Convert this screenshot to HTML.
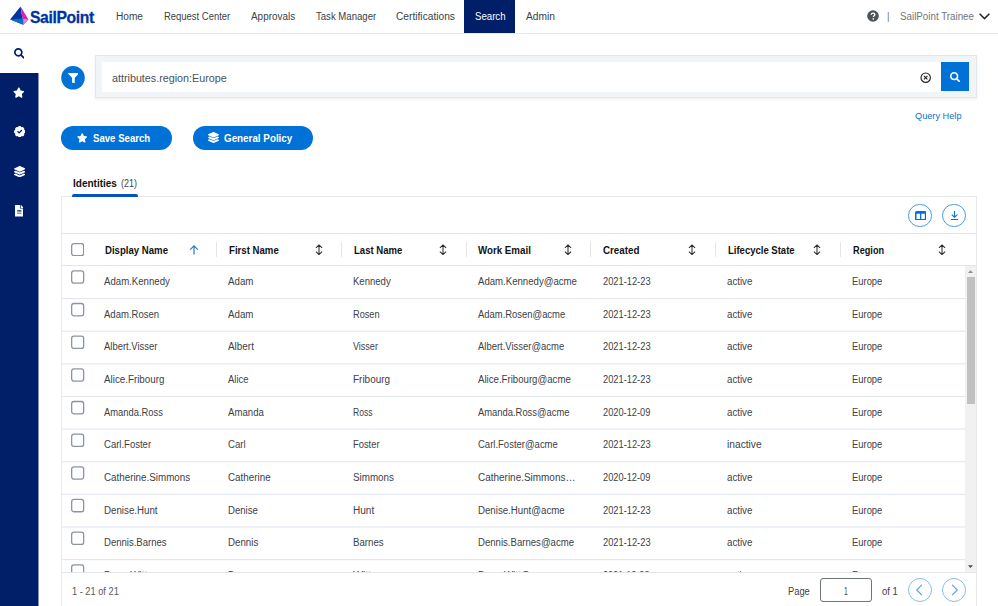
<!DOCTYPE html>
<html><head><meta charset="utf-8"><title>Search</title>
<style>
html,body{margin:0;padding:0;overflow:hidden}
html{width:998px;height:606px}
body{width:998px;height:606px;position:relative;overflow:hidden;background:#fff;font-family:"Liberation Sans",sans-serif}
div,span,svg{position:absolute;box-sizing:border-box}
.t{white-space:nowrap;line-height:14px;transform-origin:0 50%;display:block}
.nav{left:0;top:0;width:998px;height:34px;border-bottom:1px solid #e6e8eb;background:#fff}
.act{left:464px;top:0;width:51px;height:33.3px;background:#011e69}
.side{left:0;top:73px;width:38.2px;height:533px;background:#011e69}
.sbox{left:95px;top:55px;width:882px;height:43px;background:#f1f5f8;border:1px solid #e2e7ec;box-shadow:0 1px 3px rgba(0,0,0,.08)}
.sinp{left:102px;top:62px;width:839px;height:29.6px;background:#fff}
.sbtn{left:940.6px;top:62px;width:28.8px;height:29.4px;background:#0071d6}
.fcirc{left:61.2px;top:65.7px;width:23.8px;height:23.8px;border-radius:12px;background:#0071d6}
.pill{top:125.8px;height:23.8px;border-radius:12px;background:#0071d6}
.tabu{left:71.8px;top:194px;width:66.5px;height:2.8px;background:#0553c4;border-radius:2px 2px 0 0}
.tbl{left:61px;top:196.3px;width:916.3px;height:409.7px;border:1px solid #e8e9ec;border-bottom:0;background:#fff}
.hl{left:62px;width:914.5px;height:1px;background:#e1e5ed}
.rl{left:62px;width:903.5px;height:1px;background:#e5e9f2}
.sep{top:241.7px;width:1px;height:15.3px;background:#e4e6ea}
.cb{left:71px;width:13.2px;height:13.2px;border:1px solid #8e959c;border-radius:2.5px;background:#fff}
.circ{width:23.6px;height:23.6px;border-radius:12px;border:1px solid #4a9be6;background:#fff}
.sbar{left:965.4px;top:265.5px;width:11px;height:307px;background:#f1f1f1}
.thumb{left:966.8px;top:277px;width:8.2px;height:127px;background:#c1c1c1}
.foot{left:62px;top:572.2px;width:914px;height:34px;background:#fff;border-top:1px solid #e5e6ea}
.pinp{left:819.8px;top:578px;width:52px;height:23.6px;border:1px solid #6d747b;border-radius:3px;background:#fff}
#rows{left:0;top:0;width:998px;height:572.4px;overflow:hidden}
</style></head><body>
<div class="nav"></div>
<div class="act"></div>
<!-- logo -->
<svg style="left:9px;top:5px" width="22" height="22" viewBox="9 5 22 22">
<polygon points="20.6,6.6 10.1,19.6 23.4,24.7" fill="#0033a1"/>
<polygon points="20.6,6.6 28.4,19.5 23.4,24.7" fill="#cc27b0"/>
<polygon points="10.1,19.6 23.2,18.4 23.4,24.7" fill="#0071ce"/>
<polygon points="23.2,18.4 28.4,19.5 23.4,24.7" fill="#e17fd2"/>
</svg>
<span class="t" id="logo" style="-webkit-text-stroke:.3px #0033a1;left:29.7px;top:7.7px;font-size:17px;line-height:20px;font-weight:700;color:#0033a1;letter-spacing:-0.4px;transform:scaleX(0.925)">SailPoint</span>
<div style="left:93.700px;top:22.300px;width:1.200px;height:1.200px;background:#5069b8"></div>
<!-- help icon -->
<svg style="left:867.4px;top:10.4px" width="12" height="12" viewBox="0 0 12 12"><circle cx="6" cy="6" r="5.8" fill="#4d5359"/><path d="M4.3 4.7c0-1 .8-1.6 1.8-1.6s1.8.6 1.800 1.500c0 1.200-1.500 1.200-1.500 2.400" stroke="#fff" stroke-width="1.300" fill="none"/><circle cx="6.300" cy="8.800" r=".850" fill="#fff"/></svg>
<svg style="left:979px;top:13px" width="11" height="7" viewBox="0 0 11 7"><path d="M.6.700 5.500 5.600 10.400.7" stroke="#22262a" stroke-width="1.500" fill="none"/></svg>
<!-- sidebar -->
<div class="side"></div>
<div style="left:38px;top:73px;width:1px;height:533px;background:rgba(0,16,92,.45)"></div>
<svg style="left:13.600px;top:48.200px" width="10.700" height="10.700" viewBox="0 0 512 512"><path fill="#011e69" d="M505 442.700 405.300 343c-4.500-4.500-10.600-7-17-7H372c27.600-35.300 44-79.700 44-128C416 93.100 322.900 0 208 0S0 93.100 0 208s93.100 208 208 208c48.300 0 92.700-16.400 128-44v16.300c0 6.400 2.500 12.500 7 17l99.700 99.700c9.400 9.400 24.600 9.400 33.900 0l28.300-28.300c9.400-9.400 9.400-24.600.1-34zM208 336c-70.700 0-128-57.200-128-128 0-70.700 57.200-128 128-128 70.700 0 128 57.200 128 128 0 70.700-57.200 128-128 128z"/></svg>
<svg style="left:13.200px;top:87.000px" width="11.600" height="11.200" viewBox="0 0 576 512"><path fill="#fff" d="M259.300 17.800 194 150.200 47.900 171.500c-26.200 3.800-36.700 36.100-17.700 54.600l105.700 103-25 145.500c-4.500 26.300 23.200 46 46.400 33.700L288 439.600l130.700 68.700c23.200 12.200 50.900-7.400 46.400-33.700l-25-145.500 105.700-103c19-18.500 8.500-50.800-17.700-54.600L382 150.200 316.700 17.800c-11.700-23.600-45.600-23.900-57.400 0z"/></svg>
<svg style="left:13.600px;top:125.900px" width="11.400" height="11.400" viewBox="0 0 512 512"><path fill="#fff" d="M512 256c0-37.700-23.700-69.900-57.100-82.400 14.700-32.400 8.800-71.900-17.900-98.600-26.700-26.700-66.200-32.600-98.600-17.900C325.900 23.700 293.700 0 256 0s-69.900 23.700-82.400 57.100c-32.400-14.700-72-8.800-98.600 17.900-26.700 26.700-32.600 66.200-17.900 98.600C23.700 186.100 0 218.300 0 256s23.700 69.900 57.100 82.400c-14.700 32.400-8.800 72 17.900 98.600 26.600 26.600 66.100 32.700 98.600 17.900 12.500 33.300 44.700 57.100 82.400 57.100s69.900-23.700 82.400-57.100c32.600 14.800 72 8.700 98.600-17.900 26.700-26.700 32.600-66.200 17.900-98.600 33.400-12.500 57.100-44.700 57.100-82.400zm-144.800-44.250L236.160 341.740c-4.310 4.280-11.280 4.250-15.550-.06l-75.720-76.330c-4.280-4.310-4.250-11.280.06-15.560l26.030-25.820c4.310-4.280 11.280-4.250 15.560.06l42.150 42.490 97.200-96.420c4.310-4.280 11.280-4.250 15.550.06l25.820 26.030c4.280 4.320 4.260 11.290-.06 15.560z"/></svg>
<svg style="left:13.600px;top:165.500px" width="11.400" height="11.400" viewBox="0 0 512 512"><path fill="#fff" d="M12.410 148.020l232.940 105.670c6.800 3.090 14.490 3.090 21.290 0l232.940-105.670c16.550-7.510 16.550-32.520 0-40.030L266.650 2.310a25.607 25.607 0 0 0-21.290 0L12.410 107.980c-16.550 7.510-16.550 32.530 0 40.040zm487.180 88.280l-58.090-26.330-161.640 73.270c-7.560 3.430-15.590 5.170-23.860 5.170s-16.290-1.740-23.860-5.170L70.510 209.970l-58.100 26.330c-16.550 7.500-16.550 32.500 0 40l232.940 105.590c6.800 3.080 14.490 3.080 21.290 0L499.590 276.300c16.550-7.500 16.550-32.500 0-40zm0 127.800l-57.870-26.230-161.860 73.370c-7.560 3.430-15.590 5.170-23.860 5.170s-16.290-1.740-23.860-5.170L70.290 337.870 12.410 364.100c-16.550 7.500-16.550 32.500 0 40l232.940 105.590c6.800 3.080 14.490 3.080 21.290 0L499.590 404.100c16.550-7.500 16.550-32.500 0-40z"/></svg>
<svg style="left:14.900px;top:205.300px" width="8.600" height="11.500" viewBox="0 0 384 512"><path fill="#fff" d="M224 136V0H24C10.700 0 0 10.700 0 24v464c0 13.300 10.700 24 24 24h336c13.300 0 24-10.700 24-24V160H248c-13.200 0-24-10.800-24-24zm64 236c0 6.600-5.400 12-12 12H108c-6.600 0-12-5.400-12-12v-8c0-6.600 5.400-12 12-12h168c6.600 0 12 5.400 12 12v8zm0-64c0 6.600-5.400 12-12 12H108c-6.600 0-12-5.400-12-12v-8c0-6.600 5.400-12 12-12h168c6.600 0 12 5.400 12 12v8zm0-72v8c0 6.600-5.400 12-12 12H108c-6.600 0-12-5.400-12-12v-8c0-6.600 5.400-12 12-12h168c6.600 0 12 5.400 12 12zm96-114.100v6.100H256V0h6.100c6.400 0 12.500 2.500 17 7l97.900 98c4.500 4.500 7 10.600 7 16.900z"/></svg>
<!-- filter & search -->
<svg style="left:58px;top:62px" width="30" height="30" viewBox="0 0 30 30"><circle cx="15.000" cy="15.800" r="11.800" fill="#0071d6"/></svg>
<svg style="left:67.700px;top:72.700px" width="10.800" height="10.800" viewBox="0 0 512 512"><path fill="#fff" d="M487.976 0H24.028C2.710 0-8.047 25.866 7.058 40.971L192 225.941V432c0 7.831 3.821 15.170 10.237 19.662l80 55.980C298.020 518.690 320 507.493 320 487.980V225.941l184.947-184.970C520.021 25.896 509.338 0 487.976 0z"/></svg>
<div class="sbox"></div>
<div class="sinp"></div>
<div class="sbtn"></div>
<svg style="left:949.700px;top:72.200px" width="10.300" height="10.300" viewBox="0 0 512 512"><path fill="#fff" d="M505 442.700 405.300 343c-4.500-4.500-10.600-7-17-7H372c27.600-35.300 44-79.700 44-128C416 93.100 322.900 0 208 0S0 93.100 0 208s93.100 208 208 208c48.300 0 92.700-16.400 128-44v16.300c0 6.400 2.500 12.500 7 17l99.700 99.700c9.400 9.400 24.600 9.400 33.900 0l28.300-28.300c9.400-9.400 9.400-24.600.1-34zM208 336c-70.700 0-128-57.200-128-128 0-70.700 57.200-128 128-128 70.700 0 128 57.200 128 128 0 70.700-57.200 128-128 128z"/></svg>
<svg style="left:920.200px;top:71.500px" width="11.400" height="11.400" viewBox="0 0 11.400 11.400"><circle cx="5.700" cy="5.700" r="4.700" fill="none" stroke="#22262a" stroke-width="1.150"/><path d="M3.950 3.950 7.450 7.450M7.450 3.950 3.950 7.450" stroke="#22262a" stroke-width="1.200"/></svg>
<!-- buttons -->
<div class="pill" style="left:61px;width:110.500px"></div>
<div class="pill" style="left:192.800px;width:120.400px"></div>
<svg style="left:76.800px;top:133px" width="10.400" height="9.800" viewBox="0 0 576 512"><path fill="#fff" d="M259.300 17.800 194 150.200 47.900 171.500c-26.200 3.800-36.700 36.100-17.700 54.600l105.700 103-25 145.500c-4.500 26.300 23.200 46 46.400 33.700L288 439.600l130.700 68.700c23.200 12.200 50.900-7.400 46.400-33.700l-25-145.500 105.700-103c19-18.500 8.500-50.800-17.700-54.600L382 150.200 316.700 17.800c-11.700-23.600-45.600-23.900-57.400 0z"/></svg>
<svg style="left:207.800px;top:132.400px" width="11" height="11" viewBox="0 0 512 512"><path fill="#fff" d="M12.410 148.020l232.940 105.670c6.800 3.090 14.490 3.090 21.290 0l232.940-105.670c16.550-7.510 16.550-32.520 0-40.030L266.650 2.310a25.607 25.607 0 0 0-21.290 0L12.410 107.980c-16.550 7.510-16.550 32.530 0 40.040zm487.180 88.280l-58.090-26.330-161.640 73.270c-7.560 3.430-15.590 5.170-23.860 5.170s-16.290-1.740-23.860-5.170L70.510 209.970l-58.100 26.330c-16.550 7.500-16.550 32.500 0 40l232.940 105.590c6.800 3.080 14.490 3.080 21.290 0L499.590 276.300c16.550-7.500 16.550-32.500 0-40zm0 127.800l-57.870-26.230-161.860 73.370c-7.560 3.430-15.590 5.170-23.860 5.170s-16.290-1.740-23.860-5.170L70.290 337.870 12.410 364.100c-16.550 7.500-16.550 32.500 0 40l232.940 105.590c6.800 3.080 14.490 3.080 21.290 0L499.590 404.100c16.550-7.500 16.550-32.500 0-40z"/></svg>
<!-- tab + table -->
<div class="tbl"></div>
<div class="tabu"></div>
<div class="hl" style="top:232.800px"></div>
<div class="hl" style="top:264.800px"></div>
<div class="circ" style="left:908.400px;top:203.500px"></div>
<div class="circ" style="left:942.300px;top:203.500px"></div>
<svg style="left:914.800px;top:210.700px" width="11.300" height="9.500" viewBox="0 0 11.300 9.500"><rect x="0" y="0" width="11.300" height="9.500" rx="1.500" fill="#0071d6"/><rect x="1.500" y="2.700" width="3.500" height="5.300" fill="#fff"/><rect x="6.300" y="2.700" width="3.500" height="5.300" fill="#fff"/></svg>
<svg style="left:949px;top:210px" width="11" height="11" viewBox="0 0 11 11"><path d="M5.500 1v6M2.700 4.600 5.500 7.300 8.300 4.600M1.800 9.500h7.400" stroke="#0071d6" stroke-width="1.100" fill="none"/></svg>
<svg style="left:71px;top:242.900px" width="13.300" height="13.300" viewBox="0 0 13.300 13.300"><rect x=".650" y=".650" width="12" height="12" rx="2.300" fill="#fff" stroke="#8b95a1" stroke-width="1.300"/></svg>
<div class="sep" style="left:216.400px"></div>
<div class="sep" style="left:341px"></div>
<div class="sep" style="left:465.700px"></div>
<div class="sep" style="left:590.300px"></div>
<div class="sep" style="left:715px"></div>
<div class="sep" style="left:839.600px"></div>
<!-- sort icons -->
<svg style="left:188.600px;top:244.600px" width="10" height="10" viewBox="0 0 10 10"><path d="M5 9.500V1M1.200 4.600 5 .9 8.800 4.600" stroke="#1a78d6" stroke-width="1.150" fill="none"/></svg>
<svg style="left:314.5px;top:243.800px" width="8" height="11.500" viewBox="0 0 8 11.500"><path d="M4 1v9.500M.9 3.900 4 .9 7.100 3.900M.9 7.600 4 10.600 7.100 7.600" stroke="#2a2e33" stroke-width="1.050" fill="none"/></svg>
<svg style="left:438.9px;top:243.800px" width="8" height="11.500" viewBox="0 0 8 11.500"><path d="M4 1v9.500M.9 3.900 4 .9 7.100 3.900M.9 7.600 4 10.600 7.100 7.600" stroke="#2a2e33" stroke-width="1.050" fill="none"/></svg>
<svg style="left:563.5px;top:243.800px" width="8" height="11.500" viewBox="0 0 8 11.500"><path d="M4 1v9.500M.9 3.900 4 .9 7.100 3.900M.9 7.600 4 10.600 7.100 7.600" stroke="#2a2e33" stroke-width="1.050" fill="none"/></svg>
<svg style="left:688.1px;top:243.800px" width="8" height="11.500" viewBox="0 0 8 11.500"><path d="M4 1v9.500M.9 3.900 4 .9 7.100 3.900M.9 7.600 4 10.600 7.100 7.600" stroke="#2a2e33" stroke-width="1.050" fill="none"/></svg>
<svg style="left:813.1px;top:243.800px" width="8" height="11.500" viewBox="0 0 8 11.500"><path d="M4 1v9.500M.9 3.900 4 .9 7.100 3.900M.9 7.600 4 10.600 7.100 7.600" stroke="#2a2e33" stroke-width="1.050" fill="none"/></svg>
<svg style="left:938.1px;top:243.800px" width="8" height="11.500" viewBox="0 0 8 11.500"><path d="M4 1v9.500M.9 3.900 4 .9 7.100 3.900M.9 7.600 4 10.600 7.100 7.600" stroke="#2a2e33" stroke-width="1.050" fill="none"/></svg>
<div id="rows">
<svg style="left:62px;top:0" width="904" height="606" viewBox="0 0 904 606"><rect x="0" y="298.00" width="903.5" height="1.15" fill="#e3e7f1"/><rect x="0" y="330.63" width="903.5" height="1.15" fill="#e3e7f1"/><rect x="0" y="363.26" width="903.5" height="1.15" fill="#e3e7f1"/><rect x="0" y="395.89" width="903.5" height="1.15" fill="#e3e7f1"/><rect x="0" y="428.52" width="903.5" height="1.15" fill="#e3e7f1"/><rect x="0" y="461.15" width="903.5" height="1.15" fill="#e3e7f1"/><rect x="0" y="493.78" width="903.5" height="1.15" fill="#e3e7f1"/><rect x="0" y="526.41" width="903.5" height="1.15" fill="#e3e7f1"/><rect x="0" y="559.04" width="903.5" height="1.15" fill="#e3e7f1"/></svg>
<svg style="left:68px;top:0" width="20" height="606" viewBox="0 0 20 606"><rect x="3.65" y="270.85" width="12" height="12.3" rx="2.3" fill="#fff" stroke="#8b95a1" stroke-width="1.3"/><rect x="3.65" y="303.51" width="12" height="12.3" rx="2.3" fill="#fff" stroke="#8b95a1" stroke-width="1.3"/><rect x="3.65" y="336.17" width="12" height="12.3" rx="2.3" fill="#fff" stroke="#8b95a1" stroke-width="1.3"/><rect x="3.65" y="368.83" width="12" height="12.3" rx="2.3" fill="#fff" stroke="#8b95a1" stroke-width="1.3"/><rect x="3.65" y="401.49" width="12" height="12.3" rx="2.3" fill="#fff" stroke="#8b95a1" stroke-width="1.3"/><rect x="3.65" y="434.15" width="12" height="12.3" rx="2.3" fill="#fff" stroke="#8b95a1" stroke-width="1.3"/><rect x="3.65" y="466.81" width="12" height="12.3" rx="2.3" fill="#fff" stroke="#8b95a1" stroke-width="1.3"/><rect x="3.65" y="499.47" width="12" height="12.3" rx="2.3" fill="#fff" stroke="#8b95a1" stroke-width="1.3"/><rect x="3.65" y="532.13" width="12" height="12.3" rx="2.3" fill="#fff" stroke="#8b95a1" stroke-width="1.3"/><rect x="3.65" y="564.79" width="12" height="12.3" rx="2.3" fill="#fff" stroke="#8b95a1" stroke-width="1.3"/></svg>
<span class="t" style="left:104.30px;top:274.64px;font-size:10px;font-weight:400;color:#3d4146;transform:scaleX(0.9630)">Adam.Kennedy</span>
<span class="t" style="left:228.10px;top:274.64px;font-size:10px;font-weight:400;color:#3d4146;transform:scaleX(0.9724)">Adam</span>
<span class="t" style="left:353.40px;top:274.64px;font-size:10px;font-weight:400;color:#3d4146;transform:scaleX(0.9536)">Kennedy</span>
<span class="t" style="left:477.50px;top:274.64px;font-size:10px;font-weight:400;color:#3d4146;transform:scaleX(0.9605)">Adam.Kennedy@acme</span>
<span class="t" style="left:602.50px;top:274.64px;font-size:10px;font-weight:400;color:#3d4146;transform:scaleX(0.9296)">2021-12-23</span>
<span class="t" style="left:727.25px;top:274.64px;font-size:10px;font-weight:400;color:#3d4146;transform:scaleX(0.9714)">active</span>
<span class="t" style="left:852.00px;top:274.64px;font-size:10px;font-weight:400;color:#3d4146;transform:scaleX(0.9407)">Europe</span>
<span class="t" style="left:104.30px;top:307.64px;font-size:10px;font-weight:400;color:#3d4146;transform:scaleX(0.9525)">Adam.Rosen</span>
<span class="t" style="left:228.10px;top:307.64px;font-size:10px;font-weight:400;color:#3d4146;transform:scaleX(0.9724)">Adam</span>
<span class="t" style="left:353.40px;top:307.64px;font-size:10px;font-weight:400;color:#3d4146;transform:scaleX(0.9207)">Rosen</span>
<span class="t" style="left:477.50px;top:307.64px;font-size:10px;font-weight:400;color:#3d4146;transform:scaleX(0.9436)">Adam.Rosen@acme</span>
<span class="t" style="left:602.50px;top:307.64px;font-size:10px;font-weight:400;color:#3d4146;transform:scaleX(0.9296)">2021-12-23</span>
<span class="t" style="left:727.25px;top:307.64px;font-size:10px;font-weight:400;color:#3d4146;transform:scaleX(0.9714)">active</span>
<span class="t" style="left:852.00px;top:307.64px;font-size:10px;font-weight:400;color:#3d4146;transform:scaleX(0.9407)">Europe</span>
<span class="t" style="left:104.30px;top:339.64px;font-size:10px;font-weight:400;color:#3d4146;transform:scaleX(0.9449)">Albert.Visser</span>
<span class="t" style="left:228.10px;top:339.64px;font-size:10px;font-weight:400;color:#3d4146;transform:scaleX(0.9925)">Albert</span>
<span class="t" style="left:353.40px;top:339.64px;font-size:10px;font-weight:400;color:#3d4146;transform:scaleX(0.9015)">Visser</span>
<span class="t" style="left:477.50px;top:339.64px;font-size:10px;font-weight:400;color:#3d4146;transform:scaleX(0.9462)">Albert.Visser@acme</span>
<span class="t" style="left:602.50px;top:339.64px;font-size:10px;font-weight:400;color:#3d4146;transform:scaleX(0.9296)">2021-12-23</span>
<span class="t" style="left:727.25px;top:339.64px;font-size:10px;font-weight:400;color:#3d4146;transform:scaleX(0.9714)">active</span>
<span class="t" style="left:852.00px;top:339.64px;font-size:10px;font-weight:400;color:#3d4146;transform:scaleX(0.9407)">Europe</span>
<span class="t" style="left:104.30px;top:372.64px;font-size:10px;font-weight:400;color:#3d4146;transform:scaleX(0.9792)">Alice.Fribourg</span>
<span class="t" style="left:228.10px;top:372.64px;font-size:10px;font-weight:400;color:#3d4146;transform:scaleX(0.9441)">Alice</span>
<span class="t" style="left:353.40px;top:372.64px;font-size:10px;font-weight:400;color:#3d4146;transform:scaleX(0.9963)">Fribourg</span>
<span class="t" style="left:477.50px;top:372.64px;font-size:10px;font-weight:400;color:#3d4146;transform:scaleX(0.9638)">Alice.Fribourg@acme</span>
<span class="t" style="left:602.50px;top:372.64px;font-size:10px;font-weight:400;color:#3d4146;transform:scaleX(0.9296)">2021-12-23</span>
<span class="t" style="left:727.25px;top:372.64px;font-size:10px;font-weight:400;color:#3d4146;transform:scaleX(0.9714)">active</span>
<span class="t" style="left:852.00px;top:372.64px;font-size:10px;font-weight:400;color:#3d4146;transform:scaleX(0.9407)">Europe</span>
<span class="t" style="left:104.30px;top:405.64px;font-size:10px;font-weight:400;color:#3d4146;transform:scaleX(0.9381)">Amanda.Ross</span>
<span class="t" style="left:228.10px;top:405.64px;font-size:10px;font-weight:400;color:#3d4146;transform:scaleX(0.9627)">Amanda</span>
<span class="t" style="left:353.40px;top:405.64px;font-size:10px;font-weight:400;color:#3d4146;transform:scaleX(0.8562)">Ross</span>
<span class="t" style="left:477.50px;top:405.64px;font-size:10px;font-weight:400;color:#3d4146;transform:scaleX(0.9394)">Amanda.Ross@acme</span>
<span class="t" style="left:602.50px;top:405.64px;font-size:10px;font-weight:400;color:#3d4146;transform:scaleX(0.9261)">2020-12-09</span>
<span class="t" style="left:727.25px;top:405.64px;font-size:10px;font-weight:400;color:#3d4146;transform:scaleX(0.9714)">active</span>
<span class="t" style="left:852.00px;top:405.64px;font-size:10px;font-weight:400;color:#3d4146;transform:scaleX(0.9407)">Europe</span>
<span class="t" style="left:104.30px;top:437.64px;font-size:10px;font-weight:400;color:#3d4146;transform:scaleX(0.9521)">Carl.Foster</span>
<span class="t" style="left:228.10px;top:437.64px;font-size:10px;font-weight:400;color:#3d4146;transform:scaleX(0.9607)">Carl</span>
<span class="t" style="left:353.40px;top:437.64px;font-size:10px;font-weight:400;color:#3d4146;transform:scaleX(0.9367)">Foster</span>
<span class="t" style="left:477.50px;top:437.64px;font-size:10px;font-weight:400;color:#3d4146;transform:scaleX(0.9495)">Carl.Foster@acme</span>
<span class="t" style="left:602.50px;top:437.64px;font-size:10px;font-weight:400;color:#3d4146;transform:scaleX(0.9296)">2021-12-23</span>
<span class="t" style="left:727.25px;top:437.64px;font-size:10px;font-weight:400;color:#3d4146;transform:scaleX(1.0219)">inactive</span>
<span class="t" style="left:852.00px;top:437.64px;font-size:10px;font-weight:400;color:#3d4146;transform:scaleX(0.9407)">Europe</span>
<span class="t" style="left:104.30px;top:470.64px;font-size:10px;font-weight:400;color:#3d4146;transform:scaleX(0.9807)">Catherine.Simmons</span>
<span class="t" style="left:228.10px;top:470.64px;font-size:10px;font-weight:400;color:#3d4146;transform:scaleX(0.9846)">Catherine</span>
<span class="t" style="left:353.40px;top:470.64px;font-size:10px;font-weight:400;color:#3d4146;transform:scaleX(0.9802)">Simmons</span>
<span class="t" style="left:477.50px;top:470.64px;font-size:10px;font-weight:400;color:#3d4146;transform:scaleX(0.9955)">Catherine.Simmons…</span>
<span class="t" style="left:602.50px;top:470.64px;font-size:10px;font-weight:400;color:#3d4146;transform:scaleX(0.9261)">2020-12-09</span>
<span class="t" style="left:727.25px;top:470.64px;font-size:10px;font-weight:400;color:#3d4146;transform:scaleX(0.9714)">active</span>
<span class="t" style="left:852.00px;top:470.64px;font-size:10px;font-weight:400;color:#3d4146;transform:scaleX(0.9407)">Europe</span>
<span class="t" style="left:104.30px;top:503.64px;font-size:10px;font-weight:400;color:#3d4146;transform:scaleX(0.9734)">Denise.Hunt</span>
<span class="t" style="left:228.10px;top:503.64px;font-size:10px;font-weight:400;color:#3d4146;transform:scaleX(0.9595)">Denise</span>
<span class="t" style="left:353.40px;top:503.64px;font-size:10px;font-weight:400;color:#3d4146;transform:scaleX(1.0021)">Hunt</span>
<span class="t" style="left:477.50px;top:503.64px;font-size:10px;font-weight:400;color:#3d4146;transform:scaleX(0.9674)">Denise.Hunt@acme</span>
<span class="t" style="left:602.50px;top:503.64px;font-size:10px;font-weight:400;color:#3d4146;transform:scaleX(0.9296)">2021-12-23</span>
<span class="t" style="left:727.25px;top:503.64px;font-size:10px;font-weight:400;color:#3d4146;transform:scaleX(0.9714)">active</span>
<span class="t" style="left:852.00px;top:503.64px;font-size:10px;font-weight:400;color:#3d4146;transform:scaleX(0.9407)">Europe</span>
<span class="t" style="left:104.30px;top:535.63px;font-size:10px;font-weight:400;color:#3d4146;transform:scaleX(0.9542)">Dennis.Barnes</span>
<span class="t" style="left:228.10px;top:535.63px;font-size:10px;font-weight:400;color:#3d4146;transform:scaleX(0.9732)">Dennis</span>
<span class="t" style="left:353.40px;top:535.63px;font-size:10px;font-weight:400;color:#3d4146;transform:scaleX(0.9670)">Barnes</span>
<span class="t" style="left:477.50px;top:535.63px;font-size:10px;font-weight:400;color:#3d4146;transform:scaleX(0.9588)">Dennis.Barnes@acme</span>
<span class="t" style="left:602.50px;top:535.63px;font-size:10px;font-weight:400;color:#3d4146;transform:scaleX(0.9296)">2021-12-23</span>
<span class="t" style="left:727.25px;top:535.63px;font-size:10px;font-weight:400;color:#3d4146;transform:scaleX(0.9714)">active</span>
<span class="t" style="left:852.00px;top:535.63px;font-size:10px;font-weight:400;color:#3d4146;transform:scaleX(0.9407)">Europe</span>
<span class="t" style="left:104.30px;top:568.63px;font-size:10px;font-weight:400;color:#3d4146;transform:scaleX(0.9839)">Dean.Witt</span>
<span class="t" style="left:228.10px;top:568.63px;font-size:10px;font-weight:400;color:#3d4146;transform:scaleX(0.9286)">Dean</span>
<span class="t" style="left:353.40px;top:568.63px;font-size:10px;font-weight:400;color:#3d4146;transform:scaleX(1.0570)">Witt</span>
<span class="t" style="left:477.50px;top:568.63px;font-size:10px;font-weight:400;color:#3d4146;transform:scaleX(0.9705)">Dean.Witt@acme</span>
<span class="t" style="left:602.50px;top:568.63px;font-size:10px;font-weight:400;color:#3d4146;transform:scaleX(0.9080)">2021-12-23</span>
<span class="t" style="left:727.25px;top:568.63px;font-size:10px;font-weight:400;color:#3d4146;transform:scaleX(0.9455)">active</span>
<span class="t" style="left:852.00px;top:568.63px;font-size:10px;font-weight:400;color:#3d4146;transform:scaleX(0.8998)">Europe</span>
</div>
<div class="sbar"></div>
<div class="thumb"></div>
<svg style="left:968.400px;top:270.300px" width="5" height="3.200" viewBox="0 0 5 3.200"><path d="M0 3 2.500 .2 5 3z" fill="#8c8c8c"/></svg>
<svg style="left:968.400px;top:565px" width="5" height="3.200" viewBox="0 0 5 3.200"><path d="M0 .2 2.500 3 5 .2z" fill="#4a4a4a"/></svg>
<div class="foot"></div>
<div class="pinp"></div>
<div class="circ" style="left:908.400px;top:578.200px;border-color:#86bdf0"></div>
<div class="circ" style="left:942.300px;top:578.200px;border-color:#86bdf0"></div>
<svg style="left:915.200px;top:584px" width="9" height="12" viewBox="0 0 9 12"><path d="M6.900 .8 1.700 6 6.900 11.200" stroke="#559fe9" stroke-width="1.100" fill="none"/></svg>
<svg style="left:950.200px;top:584px" width="9" height="12" viewBox="0 0 9 12"><path d="M2.100 .8 7.300 6 2.100 11.200" stroke="#559fe9" stroke-width="1.100" fill="none"/></svg>
<span class="t" style="left:116.33px;top:9.64px;font-size:10px;font-weight:400;color:#3a3f45;transform:scaleX(1.0120)">Home</span>
<span class="t" style="left:164.12px;top:9.64px;font-size:10px;font-weight:400;color:#3a3f45;transform:scaleX(0.9458)">Request Center</span>
<span class="t" style="left:251.11px;top:9.64px;font-size:10px;font-weight:400;color:#3a3f45;transform:scaleX(0.9922)">Approvals</span>
<span class="t" style="left:315.63px;top:9.64px;font-size:10px;font-weight:400;color:#3a3f45;transform:scaleX(0.9576)">Task Manager</span>
<span class="t" style="left:396.48px;top:9.64px;font-size:10px;font-weight:400;color:#3a3f45;transform:scaleX(1.0201)">Certifications</span>
<span class="t" style="left:475.34px;top:9.64px;font-size:10px;font-weight:400;color:#ffffff;transform:scaleX(0.9639)">Search</span>
<span class="t" style="left:525.88px;top:9.64px;font-size:10px;font-weight:400;color:#3a3f45;transform:scaleX(1.0203)">Admin</span>
<span class="t" style="left:900.08px;top:9.64px;font-size:10px;font-weight:400;color:#70767c;transform:scaleX(0.9790)">SailPoint Trainee</span>
<span class="t" style="left:887.30px;top:9.29px;font-size:11px;font-weight:400;color:#70767c;transform:scaleX(0.8743)">|</span>
<span class="t" style="left:111.77px;top:71.29px;font-size:11px;font-weight:400;color:#4b5157;transform:scaleX(0.9763)">attributes.region:Europe</span>
<span class="t" style="left:914.92px;top:108.91px;font-size:9.2px;font-weight:400;color:#0d6fd1;transform:scaleX(1.0005)">Query Help</span>
<span class="t" style="left:92.72px;top:131.63px;font-size:10px;font-weight:700;color:#fff;transform:scaleX(0.9622)">Save Search</span>
<span class="t" style="left:224.29px;top:131.63px;font-size:10px;font-weight:700;color:#fff;transform:scaleX(0.9826)">General Policy</span>
<span class="t" style="left:73.30px;top:176.63px;font-size:10px;font-weight:700;color:#121212;transform:scaleX(0.9999)">Identities</span>
<span class="t" style="left:120.50px;top:176.63px;font-size:10px;font-weight:400;color:#444;transform:scaleX(0.8990)">(21)</span>
<span class="t" style="left:105.05px;top:243.63px;font-size:10px;font-weight:700;color:#121212;transform:scaleX(0.9606)">Display Name</span>
<span class="t" style="left:229.05px;top:243.63px;font-size:10px;font-weight:700;color:#121212;transform:scaleX(0.9628)">First Name</span>
<span class="t" style="left:354.32px;top:243.63px;font-size:10px;font-weight:700;color:#121212;transform:scaleX(0.9558)">Last Name</span>
<span class="t" style="left:478.27px;top:243.63px;font-size:10px;font-weight:700;color:#121212;transform:scaleX(0.9734)">Work Email</span>
<span class="t" style="left:602.68px;top:243.63px;font-size:10px;font-weight:700;color:#121212;transform:scaleX(0.9780)">Created</span>
<span class="t" style="left:728.32px;top:243.63px;font-size:10px;font-weight:700;color:#121212;transform:scaleX(0.9511)">Lifecycle State</span>
<span class="t" style="left:852.59px;top:243.63px;font-size:10px;font-weight:700;color:#121212;transform:scaleX(0.9184)">Region</span>
<span class="t" style="left:72.18px;top:584.63px;font-size:10px;font-weight:400;color:#555b61;transform:scaleX(0.9250)">1 - 21 of 21</span>
<span class="t" style="left:788.07px;top:584.63px;font-size:10px;font-weight:400;color:#3d4146;transform:scaleX(0.9336)">Page</span>
<span class="t" style="left:843.60px;top:584.63px;font-size:10px;font-weight:400;color:#3d4146;transform:scaleX(0.6831)">1</span>
<span class="t" style="left:882.10px;top:584.63px;font-size:10px;font-weight:400;color:#3d4146;transform:scaleX(0.9526)">of 1</span>
</body></html>
